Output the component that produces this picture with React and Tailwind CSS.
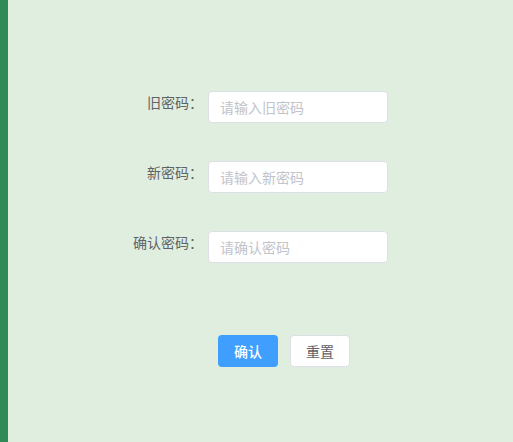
export default function App() {
  const font = { fontFamily: '"Noto Sans CJK SC", "Noto Sans", sans-serif' };
  const rows = [
    ["旧密码：", "请输入旧密码"],
    ["新密码：", "请输入新密码"],
    ["确认密码：", "请确认密码"],
  ];
  return (
    <div className="flex h-[442px] w-[513px] overflow-hidden" style={font}>
      <div className="w-2 shrink-0 bg-[#2e8b57]" />
      <div className="flex-1 bg-[#e0eee0] pt-[91px]">
        <div className="flex flex-col gap-[38px]">
          {rows.map(([label, ph]) => (
            <div key={label} className="flex items-start">
              <div className="w-[200px] shrink-0 pr-[5px] text-right text-[14px] leading-[23px] text-[#606266]">
                {label}
              </div>
              <input
                type="password"
                placeholder={ph}
                className="h-8 w-[180px] rounded border border-[#dcdfe6] bg-white px-[11px] text-[14px] text-[#606266] outline-none placeholder:text-[#c0c4cc]"
              />
            </div>
          ))}
        </div>
        <div className="mt-[72px] flex gap-3 pl-[210px]">
          <button className="h-8 w-[60px] rounded bg-[#409eff] text-[14px] font-medium text-white">确认</button>
          <button className="h-8 w-[60px] rounded border border-[#dcdfe6] bg-white text-[14px] text-[#606266]">重置</button>
        </div>
      </div>
    </div>
  );
}
